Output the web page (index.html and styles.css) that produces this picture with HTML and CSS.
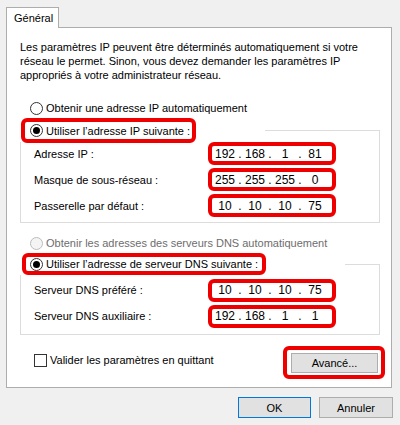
FILE: index.html
```html
<!DOCTYPE html>
<html lang="fr">
<head>
  <meta charset="UTF-8">
  <title>Propriétés de : Protocole Internet version 4 (TCP/IPv4)</title>
  <link rel="stylesheet" href="styles.css">
</head>
<body>
  <div class="tabs">
    <div class="tab">Général</div>
  </div>

  <div class="panel">
    <p class="intro">Les paramètres IP peuvent être déterminés automatiquement si votre réseau le permet. Sinon, vous devez demander les paramètres IP appropriés à votre administrateur réseau.</p>

    <label class="opt opt-first"><span class="radio"></span>Obtenir une adresse IP automatiquement</label>

    <div class="legend-row">
      <label class="opt hl hl-ip"><span class="radio checked"></span>Utiliser l’adresse IP suivante :</label>
      <span class="rule rule-ip"></span>
    </div>
    <div class="frame-body frame-ip">
      <div class="field-row">
        <span class="field-label">Adresse IP :</span>
        <div class="ipbox"><span>192</span><i>.</i><span>168</span><i>.</i><span>1</span><i>.</i><span>81</span></div>
      </div>
      <div class="field-row">
        <span class="field-label">Masque de sous-réseau :</span>
        <div class="ipbox"><span>255</span><i>.</i><span>255</span><i>.</i><span>255</span><i>.</i><span>0</span></div>
      </div>
      <div class="field-row">
        <span class="field-label">Passerelle par défaut :</span>
        <div class="ipbox"><span>10</span><i>.</i><span>10</span><i>.</i><span>10</span><i>.</i><span>75</span></div>
      </div>
    </div>

    <label class="opt opt-dns disabled"><span class="radio"></span>Obtenir les adresses des serveurs DNS automatiquement</label>

    <div class="legend-row">
      <label class="opt hl hl-dns"><span class="radio checked"></span>Utiliser l’adresse de serveur DNS suivante :</label>
      <span class="rule rule-dns"></span>
    </div>
    <div class="frame-body frame-dns">
      <div class="field-row">
        <span class="field-label">Serveur DNS préféré :</span>
        <div class="ipbox"><span>10</span><i>.</i><span>10</span><i>.</i><span>10</span><i>.</i><span>75</span></div>
      </div>
      <div class="field-row">
        <span class="field-label">Serveur DNS auxiliaire :</span>
        <div class="ipbox"><span>192</span><i>.</i><span>168</span><i>.</i><span>1</span><i>.</i><span>1</span></div>
      </div>
    </div>

    <div class="bottom-row">
      <label class="check"><span class="box"></span>Valider les paramètres en quittant</label>
      <div class="hl hl-btn"><button class="btn">Avancé...</button></div>
    </div>
  </div>

  <div class="actions">
    <button class="btn btn-ok">OK</button>
    <button class="btn btn-cancel">Annuler</button>
  </div>
</body>
</html>
```

FILE: styles.css
```css
* {
  box-sizing: border-box;
}
body {
  margin: 0;
  width: 400px;
  height: 425px;
  background-color: #f0f0f0;
  font-family: "Liberation Sans", Arial, sans-serif;
  font-size: 11px;
  color: #000;
  overflow: hidden;
}
.tabs {
  padding: 7px 0 0 6px;
  height: 28px;
}
.tab {
  position: relative;
  z-index: 1;
  width: 53px;
  height: 21px;
  padding: 4px 0 0 7px;
  background-color: #fff;
  border: 1px solid #adadad;
  border-bottom: none;
}
.panel {
  margin: -1px 8px 0 6px;
  height: 361px;
  padding: 12px 11px 0 13px;
  background-color: #fff;
  border: 1px solid #adadad;
}
.intro {
  margin: 0;
  line-height: 14px;
  padding-right: 2px;
}

/* boutons radio */
.opt {
  display: flex;
  align-items: center;
  height: 16px;
  white-space: nowrap;
}
.opt-first {
  margin: 18px 0 0 10px;
}
.opt-dns {
  margin: 12px 0 0 10px;
}
.disabled {
  color: #6d6d6d;
}
.radio {
  flex: none;
  width: 13px;
  height: 13px;
  margin-right: 3px;
  border: 1px solid #333;
  border-radius: 50%;
  background-color: #fff;
  display: flex;
  align-items: center;
  justify-content: center;
}
.radio.checked::after {
  content: "";
  width: 7px;
  height: 7px;
  border-radius: 50%;
  background-color: #000;
}
.disabled .radio {
  border-color: #bcbcbc;
  background-color: #f4f4f4;
}

/* encadrés rouges */
.hl {
  border: 4px solid #ee0000;
  border-radius: 6px;
}
.legend-row {
  display: flex;
  margin-top: 2px;
}
.hl-ip {
  height: 25px;
  width: 175px;
  margin-left: 1px;
  padding-left: 5px;
}
.hl-dns {
  height: 22px;
  width: 244px;
  margin-left: 2px;
  padding-left: 4px;
}
.rule {
  border-top: 1px solid #dcdcdc;
  border-right: 1px solid #dcdcdc;
  flex: 1;
}
.rule-ip {
  margin: 12px 0 0 69px;
}
.rule-dns {
  margin: 11px 0 0 79px;
}
.frame-body {
  border: 1px solid #dcdcdc;
  border-top: none;
  display: flex;
  flex-direction: column;
}
.frame-ip {
  margin-top: -1px;
  gap: 3px;
  padding-bottom: 5px;
}
.frame-dns {
  padding-top: 3px;
  gap: 2px;
  padding-bottom: 6px;
}
.field-row {
  display: flex;
  align-items: center;
  justify-content: space-between;
  padding: 0 43px 0 13px;
}
.frame-dns .field-row {
  height: 24px;
}
.ipbox {
  width: 128px;
  height: 23px;
  border: 4px solid #ee0000;
  border-radius: 6px;
  background-color: #fff;
  display: flex;
  align-items: center;
  padding-left: 2px;
  font-size: 12px;
}
.ipbox span {
  width: 22px;
  text-align: center;
}
.ipbox i {
  font-style: normal;
  width: 8px;
  text-align: center;
}

/* bas du panneau */
.bottom-row {
  display: flex;
  justify-content: space-between;
  margin: 11px -5px 0 0;
}
.check {
  display: flex;
  align-items: center;
  margin: 7px 0 0 14px;
  height: 14px;
}
.box {
  width: 13px;
  height: 13px;
  border: 1px solid #333;
  background-color: #fff;
  margin-right: 3px;
}
.hl-btn {
  width: 102px;
  height: 33px;
  padding: 3px 3px 2px 4px;
}
.btn {
  font: inherit;
  color: #000;
  background-color: #e1e1e1;
  border: 1px solid #adadad;
  padding: 0;
  width: 100%;
  height: 100%;
}
.actions {
  display: flex;
  justify-content: flex-end;
  gap: 8px;
  padding: 9px 7px 0 0;
}
.actions .btn {
  height: 21px;
}
.btn-ok {
  width: 73px !important;
  border-color: #0078d7;
}
.btn-cancel {
  width: 74px !important;
}
```
